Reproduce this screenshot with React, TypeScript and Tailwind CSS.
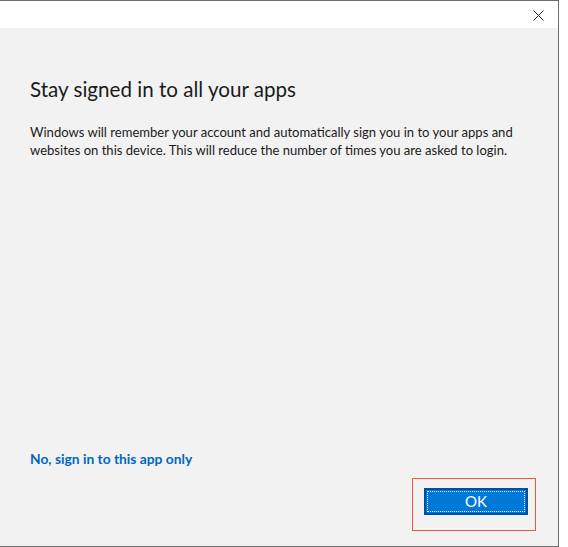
import React from "react";

export default function App() {
  const font = { fontFamily: 'Lato, "Noto Sans", sans-serif' };
  return (
    <div className="w-[568px] h-[547px] bg-white" style={font}>
      <div className="w-[559px] h-[547px] flex flex-col border-t border-r border-b border-[#6e6e6e] bg-[#f2f2f2]">
        <div className="h-[27px] bg-white flex items-center justify-end pr-[14px] shrink-0">
          <svg width="11" height="11" viewBox="0 0 11 11" className="mt-[1px]">
            <path d="M0.5 0.5 L10.5 10.5 M10.5 0.5 L0.5 10.5" stroke="#222" strokeWidth="1" fill="none" />
          </svg>
        </div>
        <div className="flex-1 flex flex-col pl-[30px]">
          <h1 className="mt-[47px] text-[20.6px] leading-[28px] text-[#1b1b1b] font-normal whitespace-nowrap">
            Stay signed in to all your apps
          </h1>
          <p className="mt-[20px] text-[13.05px] leading-[18px] text-[#1b1b1b] whitespace-nowrap">
            Windows will remember your account and automatically sign you in to your apps and
            <br />
            websites on this device. This will reduce the number of times you are asked to login.
          </p>
          <div className="flex-1" />
          <a className="text-[13.8px] leading-[19px] font-bold text-[#0067c0] self-start">
            No, sign in to this app only
          </a>
          <div className="flex justify-end pr-[22px] mt-[10px] mb-[15px]">
            <div className="border border-[#e9573f] pl-[11px] pt-[9px] pr-[7px] pb-[15px]">
              <button className="w-[104px] h-[27px] bg-[#0078d7] border-2 border-[#00509e] p-[1px] flex">
                <span className="flex-1 border border-dotted border-white flex items-center justify-center text-white text-[15px] leading-none">
                  OK
                </span>
              </button>
            </div>
          </div>
        </div>
      </div>
    </div>
  );
}
